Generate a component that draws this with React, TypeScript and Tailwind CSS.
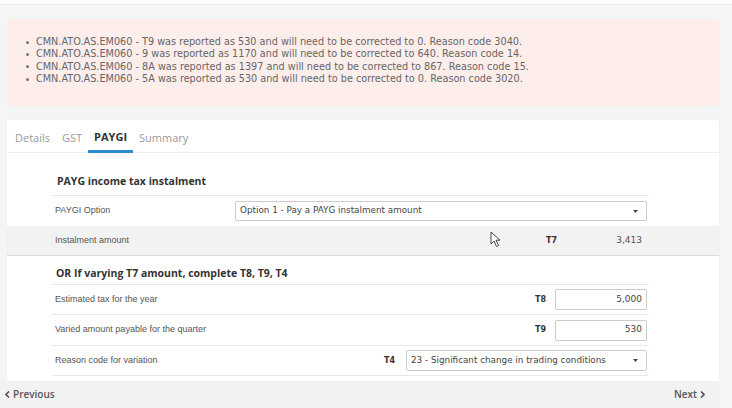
import React from 'react';

const MESSAGES = [
  'CMN.ATO.AS.EM060 - T9 was reported as 530 and will need to be corrected to 0. Reason code 3040.',
  'CMN.ATO.AS.EM060 - 9 was reported as 1170 and will need to be corrected to 640. Reason code 14.',
  'CMN.ATO.AS.EM060 - 8A was reported as 1397 and will need to be corrected to 867. Reason code 15.',
  'CMN.ATO.AS.EM060 - 5A was reported as 530 and will need to be corrected to 0. Reason code 3020.',
];

const TABS = ['Details', 'GST', 'PAYGI', 'Summary'];

const verdana = "font-['DejaVu_Sans',Verdana,sans-serif]";
const arial = "font-['Liberation_Sans',Arial,sans-serif]";
const open = "font-['Open_Sans',sans-serif]";

function Caret() {
  return (
    <svg width="5" height="3" viewBox="0 0 5 3" className="shrink-0">
      <path d="M0 0 H5 L2.5 3 Z" fill="#444" />
    </svg>
  );
}

function Label({ children }: { children: React.ReactNode }) {
  return <div className={`flex-1 pl-[3px] text-[9px] text-[#555] ${arial}`}>{children}</div>;
}

function Code({ children }: { children: React.ReactNode }) {
  return <span className={`text-[8px] font-bold text-[#333] ${verdana}`}>{children}</span>;
}

export default function App() {
  return (
    <div className="relative w-[732px] h-[408px] overflow-hidden bg-[#f4f5f5]">
      <div className="h-[5px] bg-[#fbfbfb] border-b border-[#ececec]" />

      {/* validation messages */}
      <div className="mt-[14px] ml-[7px] w-[712px] h-[87px] rounded-[3px] bg-[#fdedeb] pt-[17px] pl-[19px]">
        <ul className={`text-[9.7px] leading-[12.3px] text-[#666] ${verdana}`}>
          {MESSAGES.map((m) => (
            <li key={m} className="flex items-center whitespace-nowrap">
              <span className="w-[3px] h-[3px] bg-[#777] rounded-full mr-[7px]" />
              {m}
            </li>
          ))}
        </ul>
      </div>

      {/* card */}
      <div className="mt-[14px] ml-[7px] w-[712px] h-[261px] bg-white rounded-t-[2px] shadow-[0_0_2px_rgba(0,0,0,0.06)]">
        <div className={`h-[33px] flex items-end gap-[12px] pl-[8px] border-b border-[#efefef] ${open}`}>
          {TABS.map((t) => (
            <div
              key={t}
              className={`h-full flex items-center pt-[4px] text-[11px] ${
                t === 'PAYGI'
                  ? 'font-bold text-[#333] border-b-[3px] border-[#2b8bd0] -mb-[1px] mx-[-6px] px-[6px]'
                  : 'text-[#9a9a9a]'
              }`}
            >
              {t}
            </div>
          ))}
        </div>

        <div className="ml-[45px] w-[597px]">
          <div className={`pt-[21px] pb-[7px] pl-[5px] text-[10.5px] leading-[14px] font-bold text-[#333] border-b border-[#e8e8e8] ${open}`}>
            PAYG income tax instalment
          </div>
          <div className="h-[30px] flex items-center pr-[2px]">
            <Label>PAYGI Option</Label>
            <div className="w-[412px] h-[20px] border border-[#ccc] rounded-[2px] flex items-center justify-between pl-[4px] pr-[8px]">
              <span className={`text-[8.8px] text-[#444] ${verdana}`}>Option 1 - Pay a PAYG instalment amount</span>
              <Caret />
            </div>
          </div>
        </div>

        <div className="h-[30px] bg-[#f2f2f2] border-b border-[#dcdcdc]">
          <div className="ml-[45px] w-[597px] h-full flex items-center">
            <Label>Instalment amount</Label>
            <Code>T7</Code>
            <span className={`w-[92px] pr-[7px] text-right text-[9px] text-[#555] ${verdana}`}>3,413</span>
          </div>
        </div>

        <div className="ml-[45px] w-[597px]">
          <div className={`pt-[10px] pb-[4px] pl-[4px] text-[10.5px] leading-[14px] font-bold text-[#333] border-b border-[#e8e8e8] ${open}`}>
            OR If varying T7 amount, complete T8, T9, T4
          </div>
          <div className="h-[30px] flex items-center pr-[2px] border-b border-[#e8e8e8]">
            <Label>Estimated tax for the year</Label>
            <Code>T8</Code>
            <div className={`ml-[9px] w-[92px] h-[21px] border border-[#ccc] rounded-[2px] flex items-center justify-end pr-[4px] text-[9px] text-[#444] ${verdana}`}>
              5,000
            </div>
          </div>
          <div className="h-[31px] flex items-center pr-[2px] border-b border-[#e8e8e8]">
            <Label>Varied amount payable for the quarter</Label>
            <Code>T9</Code>
            <div className={`ml-[9px] w-[92px] h-[21px] border border-[#ccc] rounded-[2px] flex items-center justify-end pr-[4px] text-[9px] text-[#444] ${verdana}`}>
              530
            </div>
          </div>
          <div className="h-[30px] flex items-center pr-[2px] border-b border-[#e8e8e8]">
            <Label>Reason code for variation</Label>
            <Code>T4</Code>
            <div className="ml-[11px] w-[241px] h-[21px] border border-[#ccc] rounded-[2px] flex items-center justify-between pl-[4px] pr-[8px]">
              <span className={`text-[8.8px] text-[#444] ${verdana}`}>23 - Significant change in trading conditions</span>
              <Caret />
            </div>
          </div>
        </div>
      </div>

      {/* footer */}
      <div className={`w-[719px] h-[27px] bg-[#f2f2f2] flex items-center justify-between pl-[5px] pr-[14px] text-[10px] font-semibold text-[#555] ${open}`}>
        <span className="flex items-center gap-[3px]">
          <svg width="5" height="7" viewBox="0 0 5 7"><path d="M4 0.5 L1 3.5 L4 6.5" fill="none" stroke="#555" strokeWidth="1.6" /></svg>
          Previous
        </span>
        <span className="flex items-center gap-[3px]">
          Next
          <svg width="5" height="7" viewBox="0 0 5 7"><path d="M1 0.5 L4 3.5 L1 6.5" fill="none" stroke="#555" strokeWidth="1.6" /></svg>
        </span>
      </div>

      {/* mouse pointer */}
      <svg className="absolute left-[490px] top-[231px]" width="12" height="17" viewBox="0 0 12 17">
        <path d="M1 1 L1 13 L4 10 L6.5 15.5 L8.5 14.5 L6 9.2 L10 9.2 Z" fill="#fff" stroke="#333" strokeWidth="0.9" strokeLinejoin="round" />
      </svg>
    </div>
  );
}
